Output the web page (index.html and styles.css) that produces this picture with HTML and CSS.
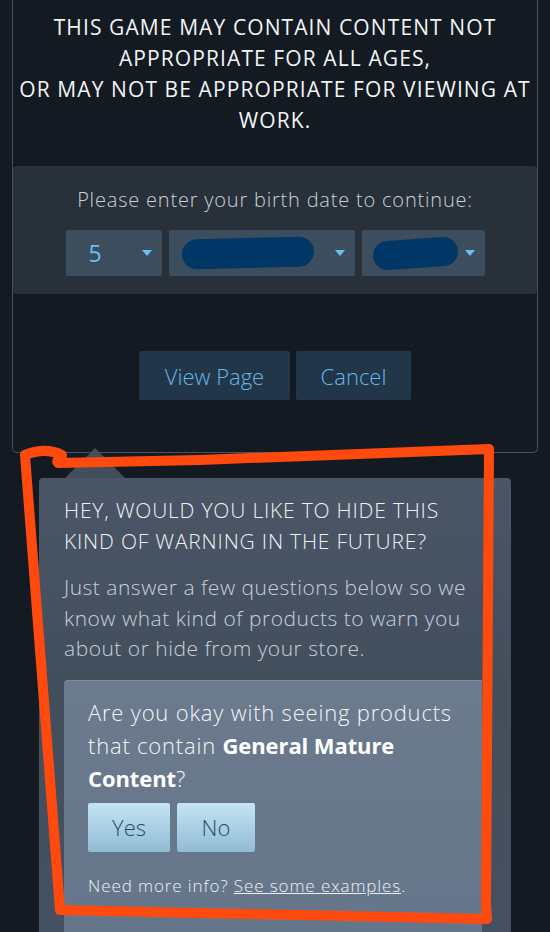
FILE: index.html
```html
<!DOCTYPE html>
<html lang="en">
<head>
  <meta charset="UTF-8">
  <title>Content Warning</title>
  <link rel="stylesheet" href="styles.css">
</head>
<body>
  <div class="page">
    <div class="age-gate">
      <h2>This game may contain content not appropriate for all ages,<br>or may not be appropriate for viewing at work.</h2>
      <div class="birth-panel">
        <p>Please enter your birth date to continue:</p>
        <div class="selects">
          <div class="select sel-day"><span class="val">5</span><i class="arrow"></i></div>
          <div class="select sel-month"><span class="scribble"></span><i class="arrow"></i></div>
          <div class="select sel-year"><span class="scribble"></span><i class="arrow"></i></div>
        </div>
      </div>
      <div class="gate-buttons">
        <a class="gate-btn btn-view">View Page</a>
        <a class="gate-btn btn-cancel">Cancel</a>
      </div>
    </div>

    <div class="popup-wrap">
      <div class="popup-arrow"></div>
      <div class="popup">
        <h3>Hey, would you like to hide this kind of warning in the future?</h3>
        <p class="popup-desc">Just answer a few questions below so we know what kind of products to warn you about or hide from your store.</p>
        <div class="question">
          <p class="q-text">Are you okay with seeing products that contain <b>General Mature Content</b>?</p>
          <div class="q-buttons">
            <a class="q-btn btn-yes">Yes</a>
            <a class="q-btn btn-no">No</a>
          </div>
          <p class="q-info">Need more info? <a>See some examples</a>.</p>
        </div>
      </div>
    </div>

    <!-- hand-drawn highlight from the screenshot -->
    <svg class="markup" width="550" height="932" viewBox="0 0 550 932">
      <path d="M25 455 C40 449 52 450 62 455 C58 459 56 461 58 463 L200 460 L489 449 L486 905 L487 919 L60 910 L25 455 Z" fill="none" stroke="#fe4a0f" stroke-width="10" stroke-linejoin="round"/>
    </svg>
  </div>
</body>
</html>
```

FILE: styles.css
```css
html, body {
  margin: 0;
  padding: 0;
  background: #131a22;
}
body {
  font-family: 'Open Sans', 'Noto Sans', Arial, sans-serif;
  color: #fff;
}
.page {
  position: relative;
  width: 550px;
  height: 932px;
  overflow: hidden;
}
.age-gate {
  margin: 0 12px;
  border: 1px solid #49515b;
  border-top: none;
  border-radius: 0 0 5px 5px;
  padding-top: 12px;
  height: 440px;
}
h2 {
  margin: 0;
  font-weight: 400;
  font-size: 21px;
  letter-spacing: 1.1px;
  line-height: 31px;
  text-transform: uppercase;
  text-align: center;
  color: #f2f4f6;
}
.birth-panel {
  margin-top: 30px;
  background: #283039;
  border-radius: 4px;
  padding: 20px 0 18px 0;
}
.birth-panel p {
  margin: 0 0 16px 0;
  text-align: center;
  font-size: 20px;
  letter-spacing: 0.8px;
  font-weight: 300;
  line-height: 28px;
  color: #c9d2db;
}
.selects {
  display: flex;
  justify-content: center;
  gap: 7px;
}
.select {
  position: relative;
  height: 46px;
  background: #3c4d5e;
  border-radius: 2px;
  display: flex;
  align-items: center;
}
.sel-day { width: 96px; }
.sel-month { width: 186px; }
.sel-year { width: 123px; }
.select .val {
  margin-left: 23px;
  font-size: 23px;
  color: #67c1f5;
}
.arrow {
  position: absolute;
  right: 10px;
  top: 20px;
  width: 0;
  height: 0;
  border-left: 5px solid transparent;
  border-right: 5px solid transparent;
  border-top: 6px solid #67c1f5;
}
.scribble {
  display: block;
  background: #013766;
  border-radius: 16px;
}
.sel-month .scribble {
  margin-left: 13px;
  width: 132px;
  height: 30px;
  transform: rotate(-1.5deg);
}
.sel-year .scribble {
  margin-left: 11px;
  width: 85px;
  height: 29px;
  transform: rotate(-4deg);
}
.gate-buttons {
  display: flex;
  justify-content: center;
  gap: 6px;
  margin-top: 57px;
}
.gate-btn {
  display: flex;
  align-items: center;
  justify-content: center;
  height: 49px;
  background: #213649;
  border-radius: 2px;
  color: #67b7e8;
  font-size: 22px;
  font-weight: 300;
}
.btn-view { width: 151px; }
.btn-cancel { width: 115px; }

.popup-wrap {
  margin: -5px 39px 0 39px;
}
.popup-arrow {
  margin-left: 26px;
  width: 0;
  height: 0;
  border-left: 30px solid transparent;
  border-right: 30px solid transparent;
  border-bottom: 30px solid #434e5d;
}
.popup {
  background: linear-gradient(to bottom, #4a5566, #434e5d 40%, #465161);
  border-radius: 4px;
  padding: 17px 0 60px 25px;
}
h3 {
  margin: 0;
  font-weight: 300;
  font-size: 21px;
  letter-spacing: 0.8px;
  line-height: 31px;
  text-transform: uppercase;
  color: #eef1f4;
  padding-right: 20px;
}
.popup-desc {
  margin: 15px 0 16px 0;
  font-size: 21px;
  letter-spacing: 0.5px;
  font-weight: 300;
  line-height: 30.5px;
  color: #c6d0da;
  padding-right: 20px;
}
.question {
  width: 394px;
  background: linear-gradient(to bottom, #6b7a8d, #66768a);
  border-top: 1px solid #7d8b9c;
  border-radius: 4px 0 0 4px;
  padding: 15px 0 40px 24px;
}
.q-text {
  margin: 0;
  font-size: 22px;
  letter-spacing: 0.8px;
  font-weight: 300;
  line-height: 33px;
  color: #f4f6f8;
  padding-right: 16px;
}
.q-text b {
  font-weight: 700;
  letter-spacing: -0.1px;
  color: #fff;
}
.q-buttons {
  display: flex;
  gap: 7px;
  margin-top: 8px;
}
.q-btn {
  display: flex;
  align-items: center;
  justify-content: center;
  height: 49px;
  border-radius: 2px;
  background: linear-gradient(to bottom, #c4e5f6, #91bbd2);
  color: #284a62;
  font-size: 22px;
  font-weight: 300;
}
.btn-yes { width: 82px; }
.btn-no { width: 78px; }
.q-info {
  margin: 22px 0 0 0;
  font-size: 17px;
  letter-spacing: 0.9px;
  font-weight: 300;
  color: #eef1f4;
}
.q-info a {
  text-decoration: underline;
}
.markup {
  position: absolute;
  left: 0;
  top: 0;
  pointer-events: none;
}
```
